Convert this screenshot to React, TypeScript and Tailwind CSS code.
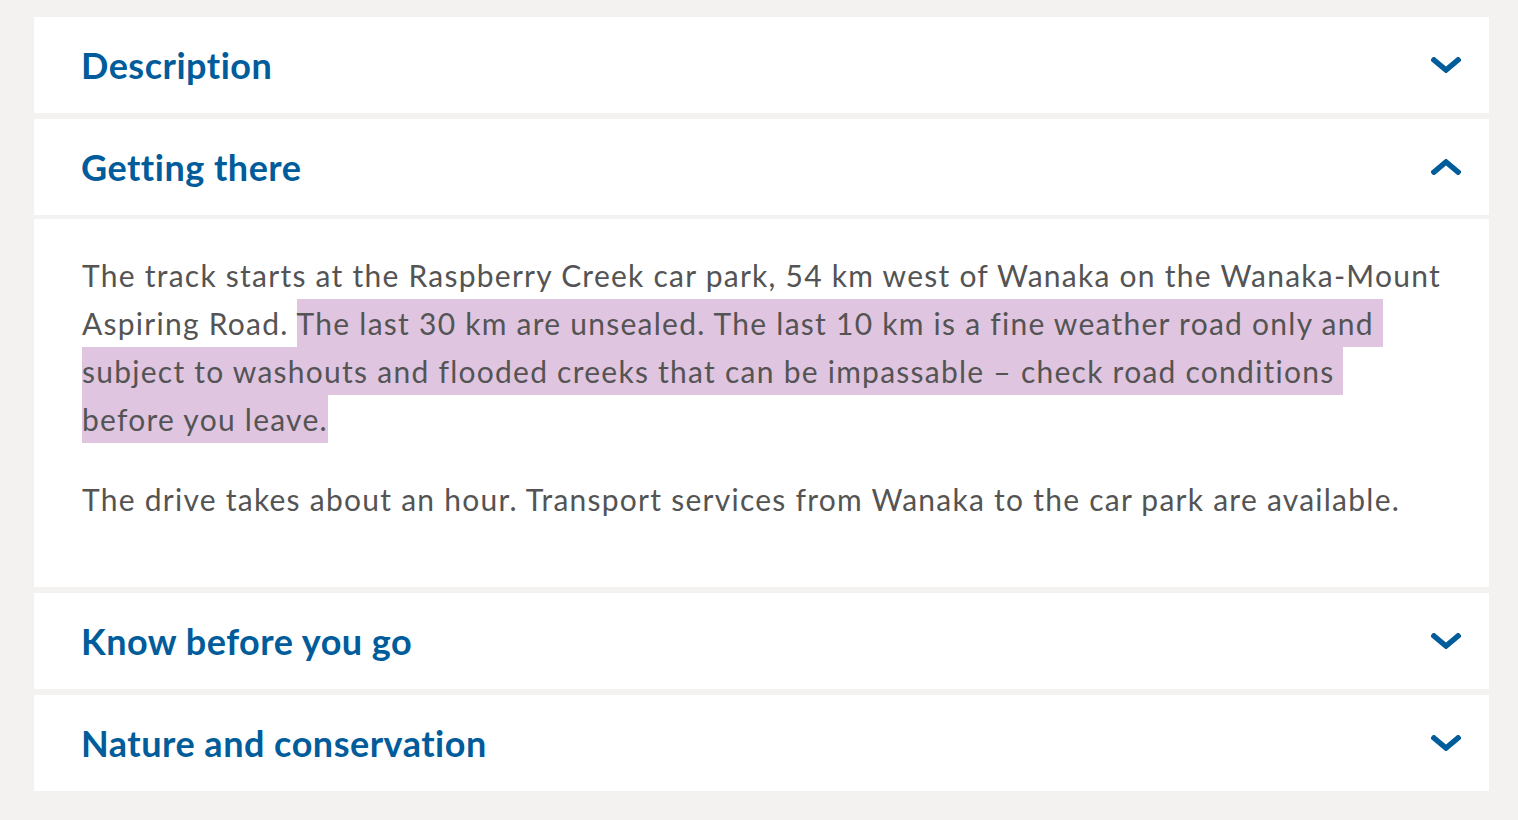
import { ReactNode } from "react";

const BLUE = "text-[#005c9a]";

function Chevron({ up = false }: { up?: boolean }) {
  return (
    <svg
      width="30"
      height="16"
      viewBox="0 0 30 16"
      className="shrink-0 text-[#005c9a]"
      aria-hidden
    >
      <polyline
        points={up ? "3,13 15,3 27,13" : "3,3 15,13 27,3"}
        fill="none"
        stroke="currentColor"
        strokeWidth="5.5"
        strokeLinecap="square"
        strokeLinejoin="miter"
      />
    </svg>
  );
}

function SectionHeader({ title, open = false }: { title: string; open?: boolean }) {
  return (
    <button className="flex h-[96px] w-full items-center justify-between bg-white pl-[47px] pr-[28px] text-left">
      <span className={`text-[36px] font-bold leading-none tracking-[0.5px] ${BLUE}`}>{title}</span>
      <Chevron up={open} />
    </button>
  );
}

function Mark({ children }: { children: ReactNode }) {
  return (
    <span className="bg-[#dfc5e0] py-[6px] [box-decoration-break:clone]">{children}</span>
  );
}

export default function App() {
  return (
    <div
      className="min-h-screen bg-[#f3f2f1] pb-[29px] pl-[34px] pr-[29px] pt-[17px]"
      style={{ fontFamily: "Lato, 'Open Sans', sans-serif" }}
    >
      <div className="flex flex-col gap-[6px]">
        <SectionHeader title="Description" />
        <div className="flex flex-col">
          <SectionHeader title="Getting there" open />
          <div className="mt-[4px] bg-white pb-[64px] pl-[48px] pr-[20px] pt-[32px] text-[30px] leading-[48px] tracking-[1.25px] text-[#545454]">
            <p>
              The track starts at the Raspberry Creek car park, 54 km west of Wanaka on the Wanaka-Mount
              <br />
              Aspiring Road.{" "}
              <Mark>
                The last 30 km are unsealed. The last 10 km is a fine weather road only and{"\u00a0"}
                <br />
                subject to washouts and flooded creeks that can be impassable – check road conditions{"\u00a0"}
                <br />
                before you leave.
              </Mark>
            </p>
            <p className="mt-[32px]">
              The drive takes about an hour. Transport services from Wanaka to the car park are available.
            </p>
          </div>
        </div>
        <SectionHeader title="Know before you go" />
        <SectionHeader title="Nature and conservation" />
      </div>
    </div>
  );
}
